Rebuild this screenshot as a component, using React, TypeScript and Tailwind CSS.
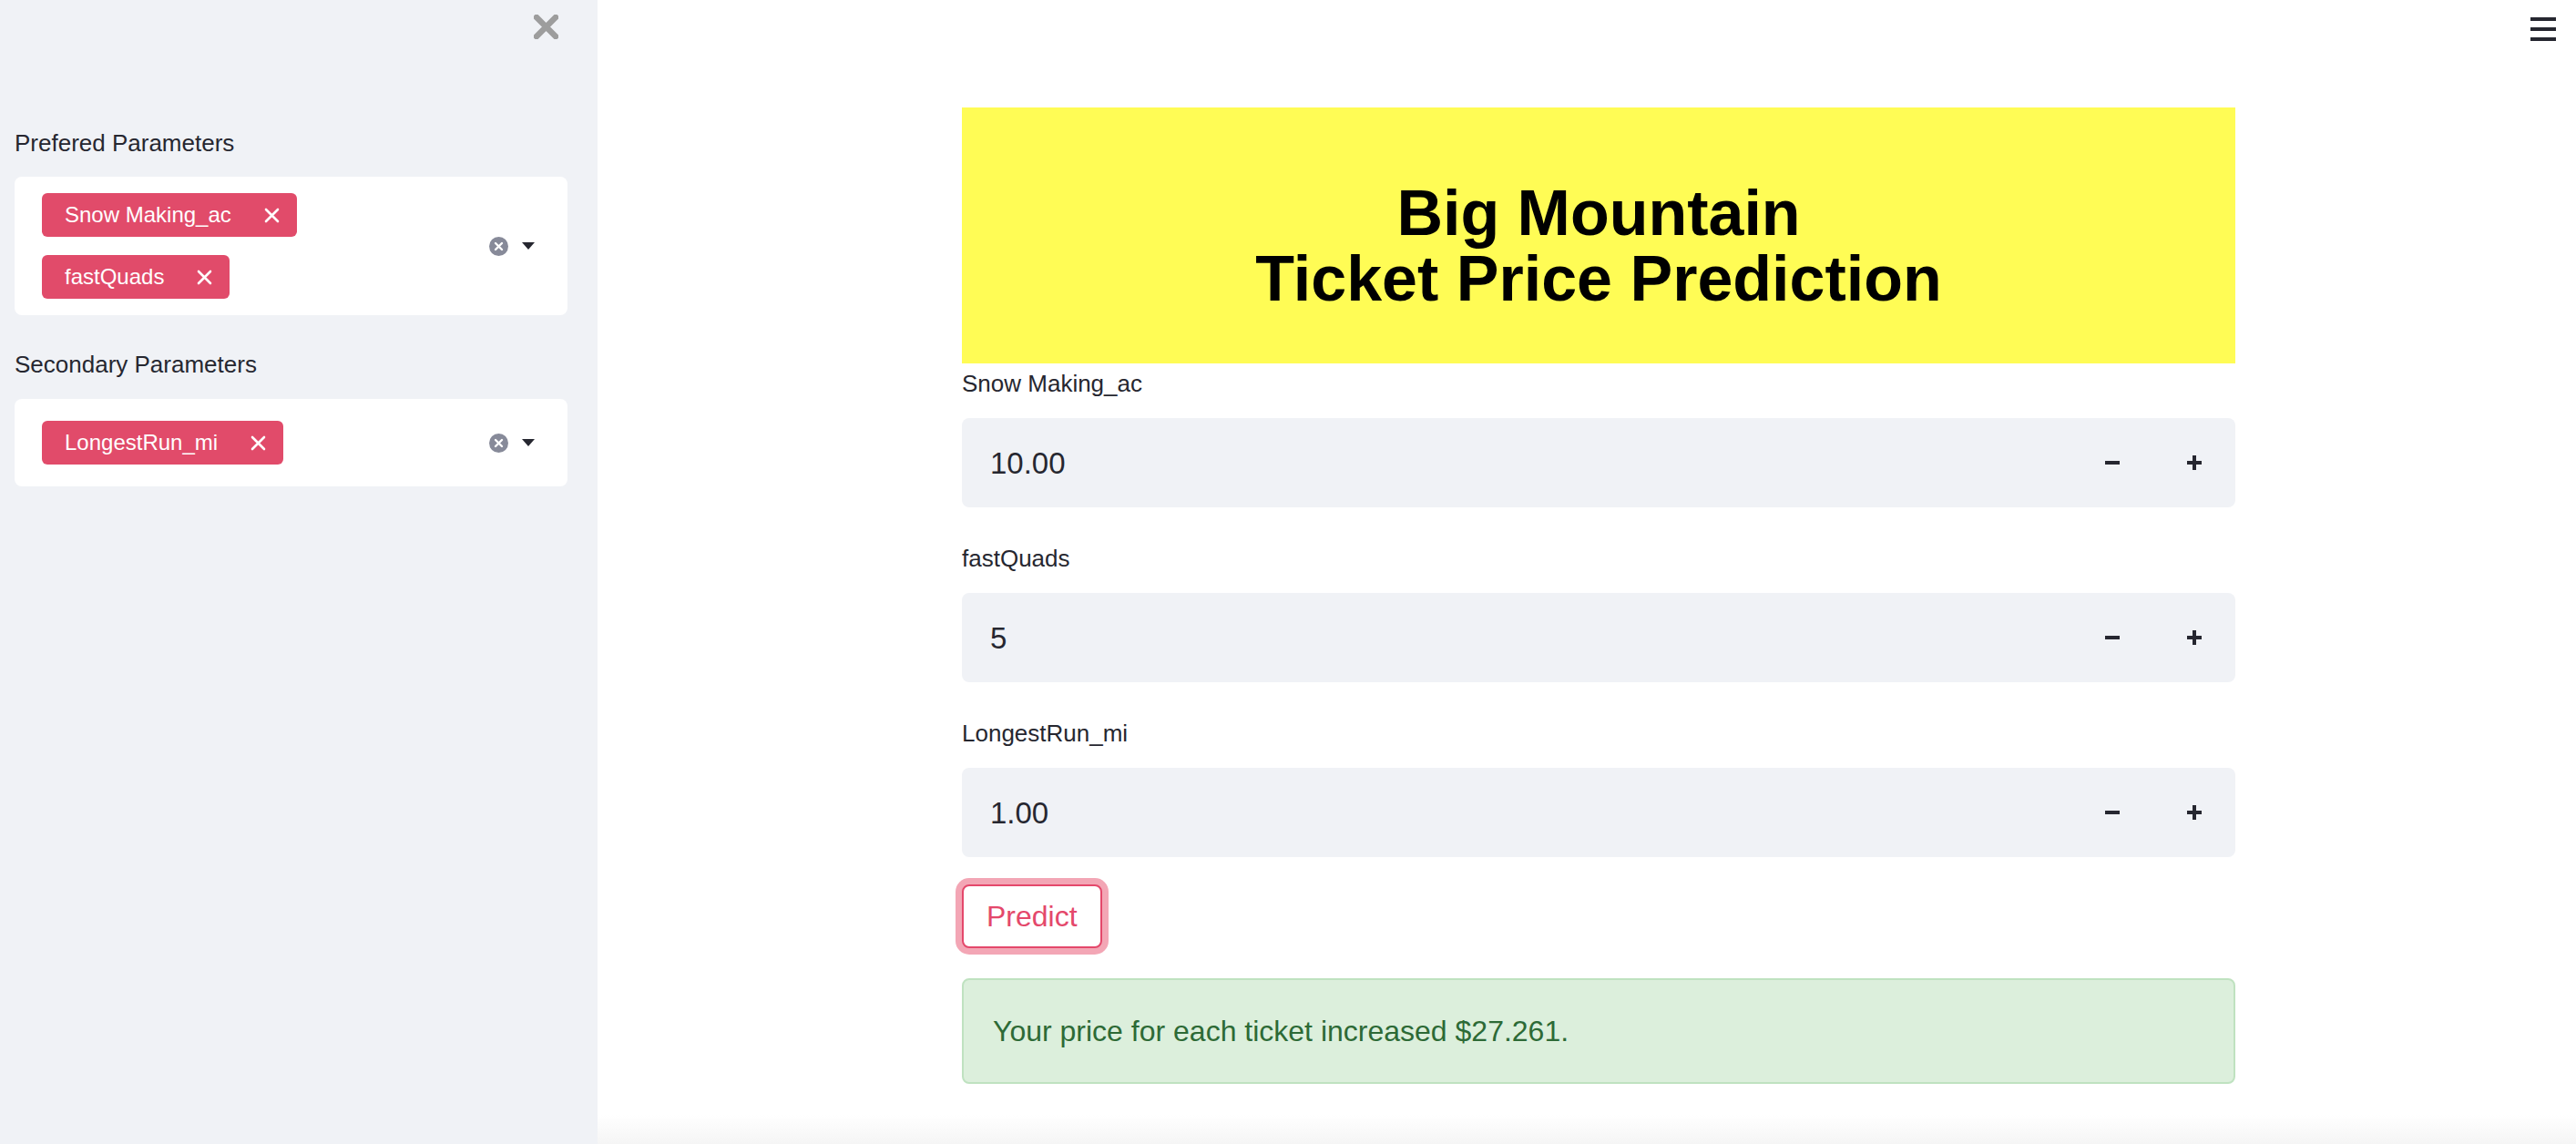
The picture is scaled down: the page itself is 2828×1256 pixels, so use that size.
import React, { useState } from 'react';

// sidebar multiselect groups
const preferred = ['Snow Making_ac', 'fastQuads'];
const secondary = ['LongestRun_mi'];

interface Field {
  label: string;
  value: string;
}

const fields: Field[] = [
  { label: 'Snow Making_ac', value: '10.00' },
  { label: 'fastQuads', value: '5' },
  { label: 'LongestRun_mi', value: '1.00' },
];

const TagX = () => (
  <svg width="17" height="17" viewBox="0 0 17 17" className="ml-[36px]">
    <path d="M2 2 L15 15 M15 2 L2 15" stroke="white" strokeWidth="2.6" strokeLinecap="round" />
  </svg>
);

const Tag: React.FC<{ text: string }> = ({ text }) => (
  <span className="inline-flex h-[48px] items-center rounded-[6px] bg-[#e14b6a] pl-[25px] pr-[19px] text-[24px] text-white">
    {text}
    <TagX />
  </span>
);

const MultiSelect: React.FC<{ items: string[]; py: string }> = ({ items, py }) => (
  <div className={`flex items-center rounded-[8px] bg-white pl-[30px] pr-[36px] ${py}`}>
    <div className="flex flex-1 flex-col items-start gap-[20px]">
      {items.map((t) => (
        <Tag key={t} text={t} />
      ))}
    </div>
    {/* clear all + caret */}
    <svg width="21" height="21" viewBox="0 0 21 21">
      <circle cx="10.5" cy="10.5" r="10.5" fill="#878a99" />
      <path d="M7 7 L14 14 M14 7 L7 14" stroke="white" strokeWidth="2.4" strokeLinecap="round" />
    </svg>
    <svg width="14" height="8" viewBox="0 0 14 8" className="ml-[15px]">
      <path d="M0 0 H14 L7 8 Z" fill="#262730" />
    </svg>
  </div>
);

const NumberInput: React.FC<{ field: Field }> = ({ field }) => {
  const [value] = useState(field.value);
  return (
    <div className="mt-[22px] flex h-[98px] items-center rounded-[8px] bg-[#f0f2f6] pl-[31px]">
      <span className="flex-1 text-[33px] leading-none text-[#262730]">{value}</span>
      <button className="flex h-full w-[90px] items-center justify-center">
        <span className="block h-[4px] w-[16px] bg-[#262730]" />
      </button>
      <button className="flex h-full w-[90px] items-center justify-center">
        <svg width="16" height="16" viewBox="0 0 16 16">
          <path d="M0 6 H16 V10 H0 Z M6 0 H10 V16 H6 Z" fill="#262730" />
        </svg>
      </button>
    </div>
  );
};

export default function App() {
  return (
    <div className="flex min-h-screen w-full font-['Liberation_Sans',Arial,sans-serif] text-[#262730]">
      {/* Sidebar */}
      <aside className="flex min-h-screen w-[656px] shrink-0 flex-col bg-[#f0f2f6] pl-[16px] pr-[33px] pt-[16px]">
        <div className="flex justify-end pr-[10px]">
          <svg width="27" height="27" viewBox="0 0 27 27">
            <path d="M3 3 L24 24 M24 3 L3 24" stroke="#9d9d9d" strokeWidth="6.5" strokeLinecap="round" />
          </svg>
        </div>
        <p className="mt-[98px] text-[26px] leading-[32px]">Prefered Parameters</p>
        <div className="mt-[21px]">
          <MultiSelect items={preferred} py="py-[18px]" />
        </div>
        <p className="mt-[38px] text-[26px] leading-[32px]">Secondary Parameters</p>
        <div className="mt-[22px]">
          <MultiSelect items={secondary} py="py-[24px]" />
        </div>
      </aside>

      {/* Main */}
      <main className="flex min-h-screen flex-1 flex-col bg-white">
        <div className="flex justify-end pr-[22px] pt-[19px]">
          <div className="flex flex-col gap-[7px]">
            <span className="block h-[4px] w-[28px] bg-[#262730]" />
            <span className="block h-[4px] w-[28px] bg-[#262730]" />
            <span className="block h-[4px] w-[28px] bg-[#262730]" />
          </div>
        </div>

        <div className="ml-[400px] mt-[73px] w-[1398px]">
          <div className="bg-[#fffc55] pb-[57px] pt-[80px] text-center text-[70px] font-bold leading-[72px] text-black">
            Big Mountain
            <br />
            Ticket Price Prediction
          </div>

          {fields.map((f, i) => (
            <div key={f.label} className={i === 0 ? 'mt-[6px]' : 'mt-[40px]'}>
              <p className="text-[26px] leading-[32px]">{f.label}</p>
              <NumberInput field={f} />
            </div>
          ))}

          <button className="mt-[30px] h-[70px] rounded-[8px] border-2 border-[#e4486b] bg-white px-[25px] text-[32px] text-[#e4486b] shadow-[0_0_0_7px_#f3a6b5]">
            Predict
          </button>

          <div className="mt-[33px] flex h-[116px] items-center rounded-[8px] border-2 border-[#bfe2c0] bg-[#dcefdc] px-[32px] text-[32px] text-[#2d6a36]">
            Your price for each ticket increased $27.261.
          </div>
        </div>

        <div className="mt-auto h-[32px] bg-gradient-to-b from-white to-[#f5f5f5]" />
      </main>
    </div>
  );
}
